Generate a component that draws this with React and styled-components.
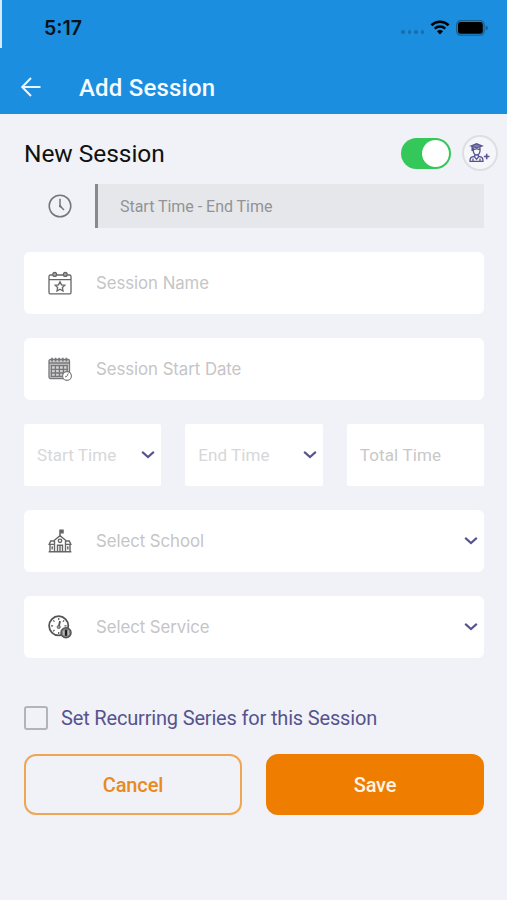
import React from "react";
import styled, { createGlobalStyle } from "styled-components";

const color = {
  header: "#1c8edf",
  page: "#f0f2f7",
  orange: "#ee7d00",
  indigo: "#56538f",
  icon: "#666666",
};

// status bar icons
function WifiIcon() {
  return (
    <svg width="20" height="15" viewBox="0 0 20 15" fill="none">
      <path d="M1.4 5.2C6.2 .6 13.8 .6 18.6 5.2" stroke="#000" strokeWidth="2.7" />
      <path d="M4.7 8.6C7.7 5.8 12.3 5.8 15.3 8.6" stroke="#000" strokeWidth="2.4" />
      <path d="M6.9 11.2Q10 8.6 13.1 11.2L10 14.4Z" fill="#000" />
    </svg>
  );
}

function BatteryIcon() {
  return (
    <svg width="33" height="16" viewBox="0 0 33 16">
      <rect x=".7" y=".7" width="27.4" height="14.4" rx="4" fill="none" stroke="#17608f" strokeWidth="1.3" />
      <rect x="2" y="2" width="24.8" height="11.8" rx="2.4" fill="#000" />
      <path d="M29.7 5.5Q32 6.2 32 8T29.7 10.5Z" fill="#17608f" />
    </svg>
  );
}

function BackIcon() {
  return (
    <svg width="22" height="22" viewBox="0 0 22 22" fill="none" stroke="#e9f6ff" strokeWidth="2">
      <path d="M20.5 11H3M11 2L2.2 11L11 20" />
    </svg>
  );
}

function StudentIcon() {
  return (
    <svg width="22" height="20" viewBox="0 0 22 20" fill="none" stroke={color.indigo} strokeWidth="1.3">
      <path d="M2 3L7.5 .8L13 3L7.5 4.8Z" fill="#8583ae" />
      <path d="M3.1 3.7V8M4.3 4.5V8Q4.6 11.6 7.6 12Q10.7 11.6 11 8V4.2M4.5 6.7Q7.6 5.2 10.8 6.7M5.8 11.5V13.2L2.7 14.2Q1 14.8 1 18.3H14Q14 14.8 12.3 14.2L9.3 13.2V11.5M5.2 13.6L7.6 16.3L9.8 13.6M4 15.5V18M11 15.5V18" />
      <path d="M17.7 10.7V16.3M14.9 13.5H20.5" strokeWidth="1.6" />
    </svg>
  );
}

function ClockIcon() {
  return (
    <svg width="24" height="24" viewBox="0 0 24 24" fill="none" stroke="#747577">
      <circle cx="12" cy="12" r="10.8" strokeWidth="1.5" />
      <path d="M12 4.7V12L16 16" strokeWidth="1.5" />
      <circle cx="12.2" cy="12.3" r="1.2" fill="#747577" stroke="none" />
    </svg>
  );
}

function EventIcon() {
  return (
    <svg width="24" height="24" viewBox="0 0 24 24" fill="none" stroke={color.icon} strokeWidth="1.3">
      <path d="M4.8 4H2.4Q1 4 1 5.4V21.4Q1 22.8 2.4 22.8H21.6Q23 22.8 23 21.4V5.4Q23 4 21.6 4H19.2M8.5 4H15.5M1 8.7H23" />
      <circle cx="6.7" cy="3.4" r="1.9" fill="#aaa" />
      <circle cx="17.3" cy="3.4" r="1.9" fill="#aaa" />
      <path d="M12 10.8L13.5 13.9L16.8 14.3L14.4 16.6L15 20L12 18.3L9 20L9.6 16.6L7.2 14.3L10.5 13.9Z" />
    </svg>
  );
}

function DateIcon() {
  return (
    <svg width="24" height="24" viewBox="0 0 24 24" fill="none" stroke="#77777a" strokeWidth="1.3">
      <rect x="1" y="2.5" width="20.5" height="19" rx="1.5" fill="#d2d2d3" />
      <path d="M1 6H21.5M2.5 8.5H20M2.5 12.3H20M2.5 16H20M2.5 19.3H15M3.4 8V20M7.4 8V20M11.4 8V20M15.4 8V20M19.2 8V15" />
      <path d="M4 .8V4.5M7.6 .8V4.5M11.2 .8V4.5M14.8 .8V4.5M18.4 .8V4.5" strokeWidth="1.7" />
      <circle cx="19" cy="19" r="4.4" fill="#fff" strokeWidth="1.1" />
      <path d="M20.3 16.3L19 19.2L17 20" strokeWidth="1" />
    </svg>
  );
}

function SchoolIcon() {
  return (
    <svg width="24" height="24" viewBox="0 0 24 24" fill="none" stroke={color.icon} strokeWidth="1.4">
      <path d="M12 7V1.3H15V3.7H12" fill={color.icon} strokeWidth="1.5" />
      <path d="M5.2 12.2L12 6.6L18.8 12.2M6.5 12V22.5M17.5 12V22.5M6 12H2.7L1.2 15.4H6M18 12H21.3L22.8 15.4H18M2 15.4V22.5M22 15.4V22.5M.7 22.7H23.3" />
      <circle cx="12" cy="11.8" r="1.7" />
      <path d="M9.5 22V16.2H14.5V22M12 16.2V22M4.2 17.3V20.6M19.8 17.3V20.6" />
    </svg>
  );
}

function ServiceIcon() {
  return (
    <svg width="24" height="24" viewBox="0 0 24 24" fill="none" stroke="#555">
      <circle cx="10.7" cy="10.8" r="9.6" strokeWidth="1.8" />
      <path d="M10.7 3V5M10.7 17V19M3 10.8H5M16.5 10.8H18.5M5.2 5.3L6.5 6.6M16.2 5.3L14.9 6.6M5.2 16.3L6.5 15" strokeWidth="1.2" />
      <path d="M12 6L10.8 12" strokeWidth="1.8" />
      <circle cx="10.7" cy="12" r="1.6" fill="#999" strokeWidth=".8" />
      <circle cx="18" cy="17.8" r="5" fill="#888" strokeWidth="1.5" />
      <path d="M18 14.8V20.8" stroke="#222" strokeWidth="2" />
      <path d="M15.8 15.5V20M20.3 15.5V20" stroke="#ccc" />
    </svg>
  );
}

function ChevronIcon() {
  return (
    <svg width="14" height="8" viewBox="0 0 14 8" fill="none" stroke={color.indigo} strokeWidth="2.1" strokeLinecap="round">
      <path d="M1.8 1.4L7 6L12.2 1.4" />
    </svg>
  );
}

function App() {
  return (
    <>
      <GlobalStyle />
      <Screen>
        <Header>
          <StatusBar>
            <Time>5:17</Time>
            <Signal>
              <i />
              <i />
              <i />
              <i />
            </Signal>
            <WifiIcon />
            <BatteryIcon />
          </StatusBar>
          <NavBar>
            <BackIcon />
            <Title>Add Session</Title>
          </NavBar>
        </Header>
        <Content>
          <SessionHead>
            <Heading>New Session</Heading>
            <Switch>
              <Knob />
            </Switch>
            <AddStudent>
              <StudentIcon />
            </AddStudent>
          </SessionHead>
          <RangeRow>
            <IconBox>
              <ClockIcon />
            </IconBox>
            <Range>Start Time - End Time</Range>
          </RangeRow>
          <Fields>
            <Field>
              <IconBox>
                <EventIcon />
              </IconBox>
              <Placeholder>Session Name</Placeholder>
            </Field>
            <Field>
              <IconBox>
                <DateIcon />
              </IconBox>
              <Placeholder>Session Start Date</Placeholder>
            </Field>
            <Times>
              <TimeField>
                <TimeText>Start Time</TimeText>
                <ChevronIcon />
              </TimeField>
              <TimeField>
                <TimeText>End Time</TimeText>
                <ChevronIcon />
              </TimeField>
              <TimeField>
                <TimeText $dark>Total Time</TimeText>
              </TimeField>
            </Times>
            <Field>
              <IconBox>
                <SchoolIcon />
              </IconBox>
              <Placeholder>Select School</Placeholder>
              <ChevronIcon />
            </Field>
            <Field>
              <IconBox>
                <ServiceIcon />
              </IconBox>
              <Placeholder>Select Service</Placeholder>
              <ChevronIcon />
            </Field>
          </Fields>
          <Recurring>
            <Checkbox />
            <RecurringText>Set Recurring Series for this Session</RecurringText>
          </Recurring>
          <Actions>
            <Button>Cancel</Button>
            <Button $filled>Save</Button>
          </Actions>
        </Content>
      </Screen>
    </>
  );
}

export default App;

const GlobalStyle = createGlobalStyle`
  * {
    box-sizing: border-box;
  }
  body {
    margin: 0;
    background-color: ${color.page};
    font-family: Roboto, sans-serif;
  }
  svg {
    flex: none;
    display: block;
  }
`;

const Screen = styled.div`
  width: 507px;
  height: 900px;
  background-color: ${color.page};
  overflow: hidden;
`;

const Header = styled.header`
  height: 114px;
  background: linear-gradient(#d5eafa, #d5eafa) 0 0 / 2px 48px no-repeat ${color.header};
`;

const StatusBar = styled.div`
  height: 60px;
  padding: 0 18px 5px 44px;
  display: flex;
  align-items: center;
`;

const Time = styled.span`
  flex: 1;
  font: 600 19.5px Inter, sans-serif;
  color: #06131d;
`;

const Signal = styled.div`
  display: flex;
  gap: 3px;
  margin: 9px 6px 0 0;
  i {
    width: 3.5px;
    height: 3.5px;
    border-radius: 50%;
    background-color: #176fae;
  }
  & + svg {
    margin-right: 6px;
  }
`;

const NavBar = styled.div`
  height: 54px;
  padding-left: 20px;
  display: flex;
  align-items: center;
  gap: 37px;
`;

const Title = styled.h1`
  margin: 0;
  padding-top: 1px;
  font-size: 24px;
  font-weight: 500;
  letter-spacing: 0.2px;
  color: #f5fbff;
`;

const Content = styled.main`
  padding: 20px 23px 0 24px;
`;

const SessionHead = styled.div`
  height: 38px;
  margin-right: -14px;
  display: flex;
  align-items: center;
`;

const Heading = styled.h2`
  flex: 1;
  margin: 0;
  font-size: 24.5px;
  font-weight: 400;
  letter-spacing: -0.05px;
  color: #111;
`;

const Switch = styled.div`
  width: 50px;
  height: 31px;
  margin-right: 11px;
  padding: 2px;
  display: flex;
  justify-content: flex-end;
  border-radius: 16px;
  background-color: #34c759;
`;

const Knob = styled.div`
  width: 27px;
  height: 27px;
  border-radius: 50%;
  background-color: #fff;
`;

const AddStudent = styled.div`
  width: 36px;
  height: 36px;
  display: flex;
  align-items: center;
  justify-content: center;
  border: 2px solid #dedfe2;
  border-radius: 50%;
  background-color: #f5f6fa;
`;

const RangeRow = styled.div`
  height: 44px;
  margin-top: 12px;
  display: flex;
  align-items: center;
`;

const IconBox = styled.div`
  width: 71px;
  flex: none;
  display: flex;
  justify-content: center;
`;

const Range = styled.div`
  flex: 1;
  height: 44px;
  padding-left: 22px;
  display: flex;
  align-items: center;
  border-left: 3px solid #88898b;
  background-color: #e6e7ea;
  font-size: 16px;
  letter-spacing: -0.03px;
  color: #929395;
`;

const Fields = styled.div`
  margin-top: 24px;
  display: flex;
  flex-direction: column;
  gap: 24px;
`;

const Field = styled.div`
  height: 62px;
  padding-right: 6px;
  display: flex;
  align-items: center;
  border-radius: 6px;
  background-color: #fff;
`;

const Placeholder = styled.span`
  flex: 1;
  padding-left: 1px;
  font: 400 16.8px Inter, sans-serif;
  letter-spacing: -0.05px;
  color: #c5c5c7;
`;

const Times = styled.div`
  display: grid;
  grid-template-columns: repeat(3, 1fr);
  gap: 24px;
`;

const TimeField = styled.div`
  height: 62px;
  padding: 0 6px 0 13px;
  display: flex;
  align-items: center;
  border-radius: 2px;
  background-color: #fff;
`;

const TimeText = styled.span`
  flex: 1;
  font-size: 17px;
  letter-spacing: ${(props) => (props.$dark ? "0.15px" : "0.05px")};
  color: ${(props) => (props.$dark ? "#c8c8c9" : "#d7d7d9")};
`;

const Recurring = styled.div`
  height: 24px;
  margin-top: 48px;
  display: flex;
  align-items: center;
  gap: 13px;
`;

const Checkbox = styled.div`
  width: 24px;
  height: 24px;
  border: 2px solid #b2b4b9;
  border-radius: 3px;
`;

const RecurringText = styled.span`
  font-size: 20px;
  letter-spacing: -0.17px;
  color: ${color.indigo};
`;

const Actions = styled.div`
  margin-top: 24px;
  display: grid;
  grid-template-columns: 1fr 1fr;
  gap: 24px;
`;

const Button = styled.button`
  height: 61px;
  border: 2px solid ${(props) => (props.$filled ? color.orange : "#f0a552")};
  border-radius: 12px;
  background-color: ${(props) => (props.$filled ? color.orange : "transparent")};
  font: 500 20px Roboto, sans-serif;
  letter-spacing: -0.15px;
  color: ${(props) => (props.$filled ? "#fff4e5" : "#e98a20")};
`;
